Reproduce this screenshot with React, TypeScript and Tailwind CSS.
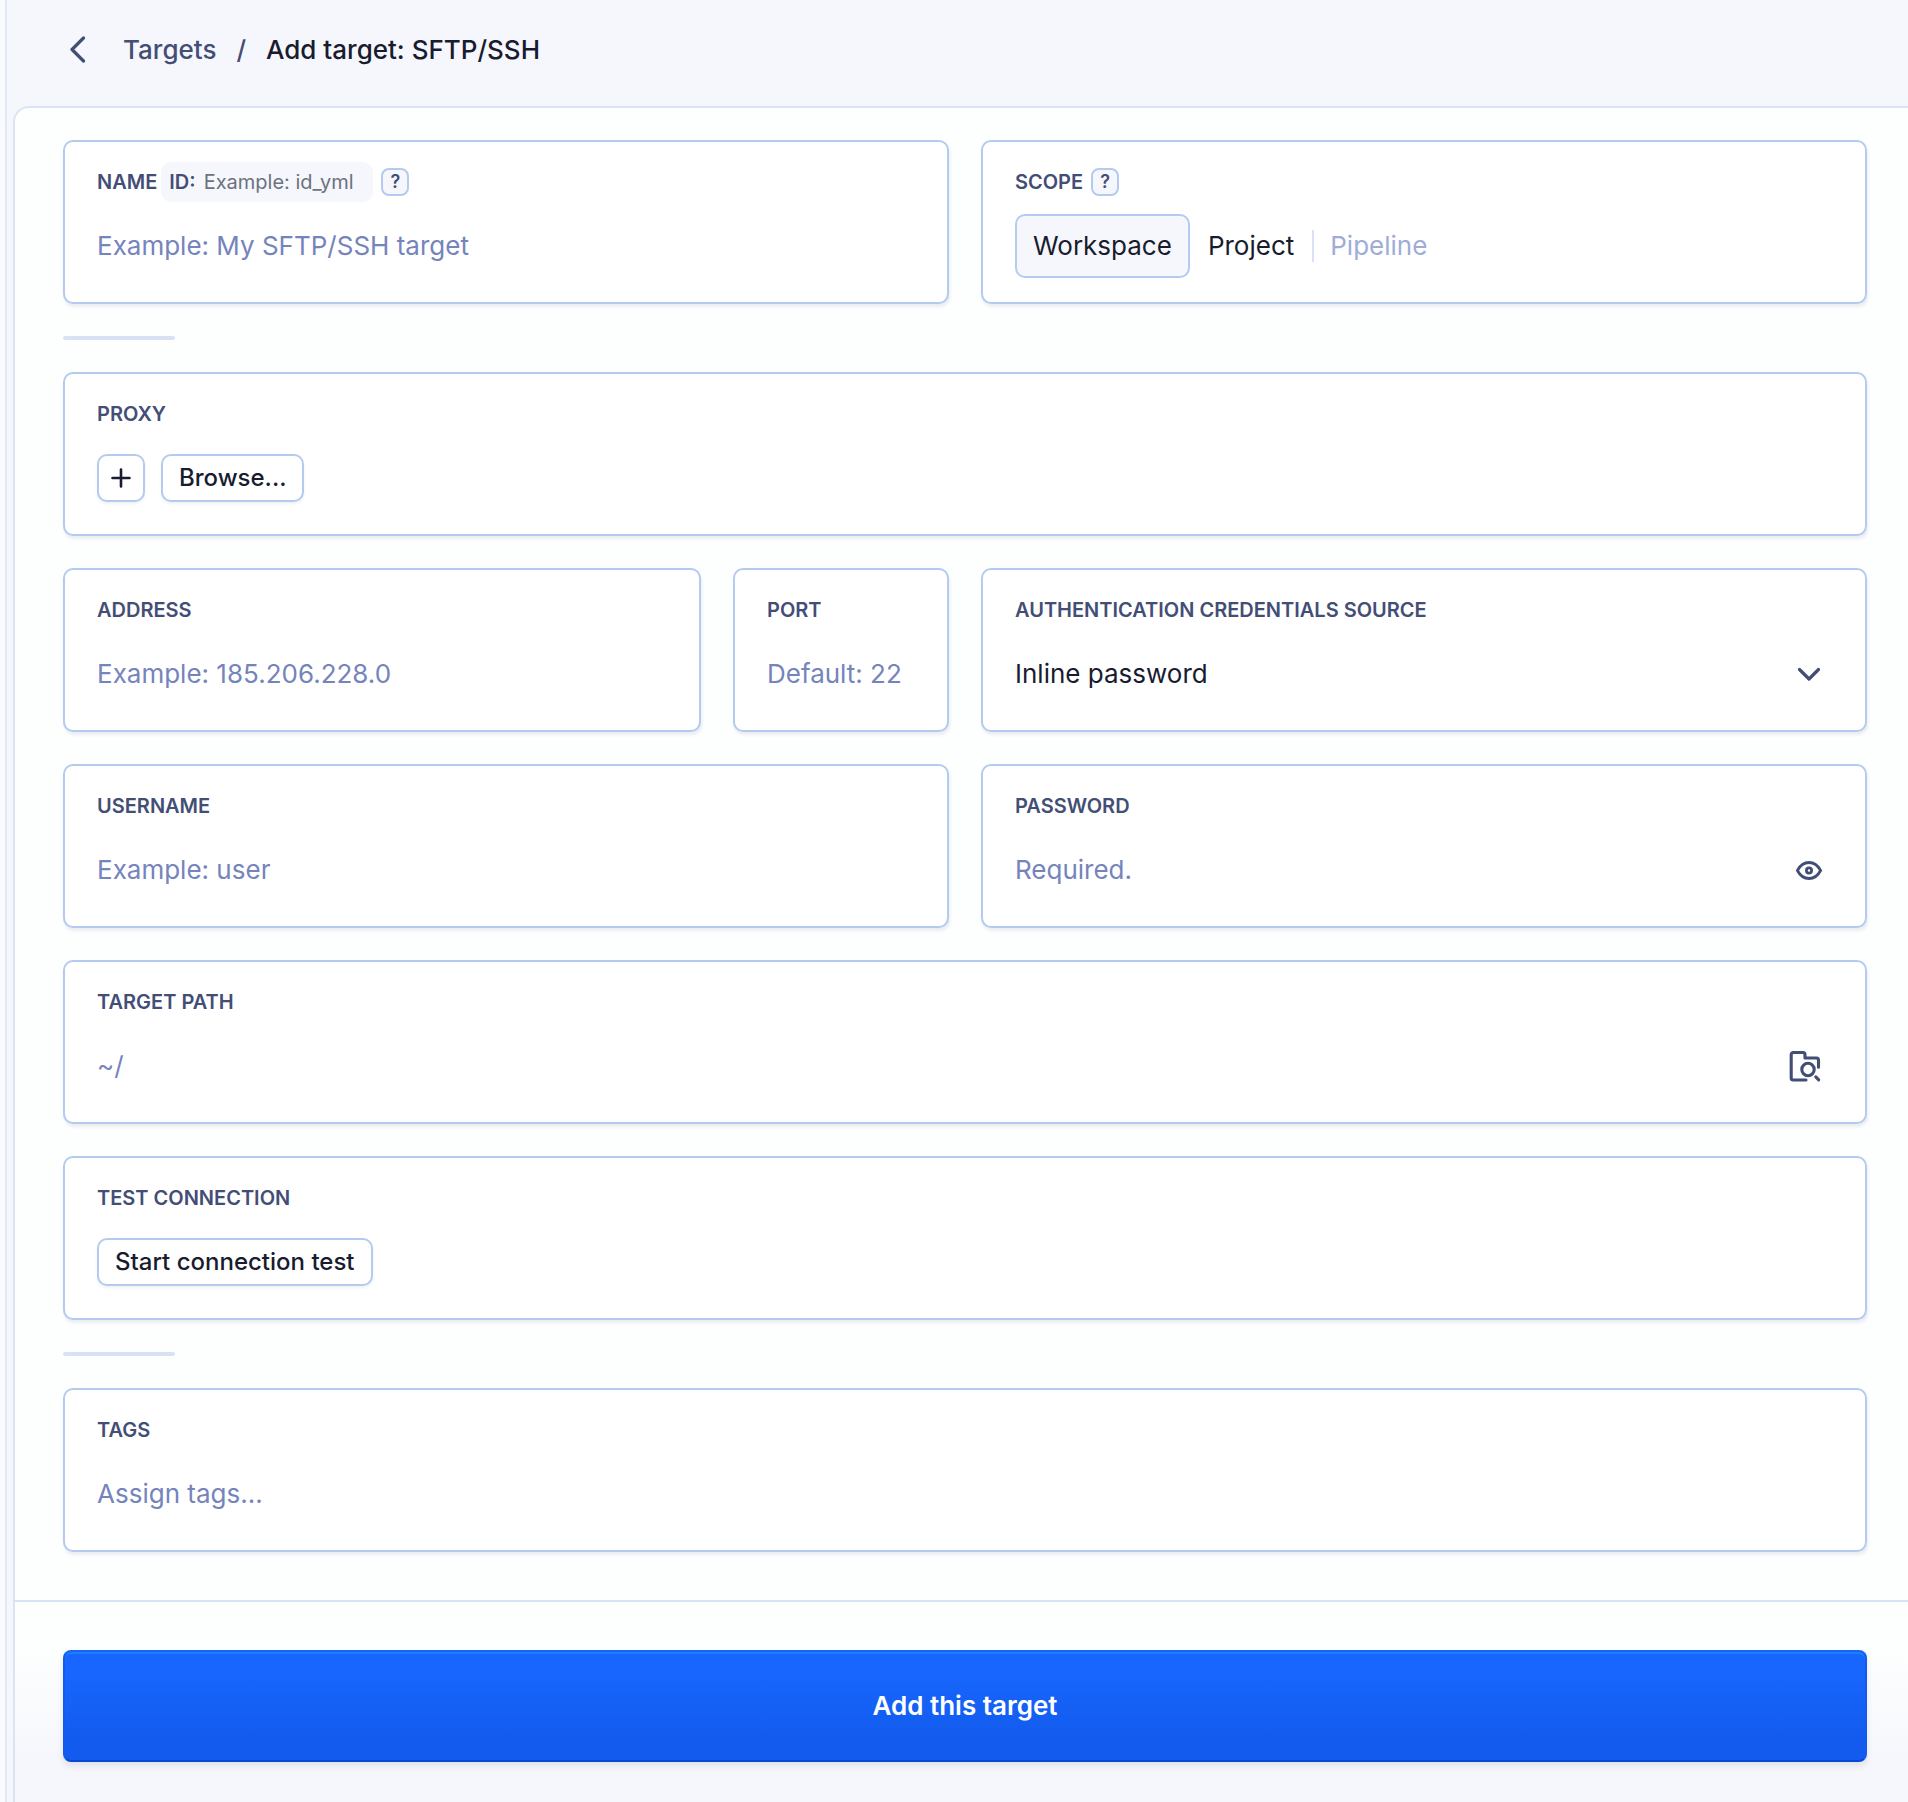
import { useState, type ReactNode } from "react";

type CardProps = {
    label: string;
    htmlFor?: string;
    extra?: ReactNode;
    className?: string;
    children: ReactNode;
}

type TextFieldProps = {
    id: string;
    label: string;
    placeholder: string;
    type?: string;
    extra?: ReactNode;
    action?: ReactNode;
    className?: string;
}

const scopes = ["Workspace", "Project"];

function Card({ label, htmlFor, extra, className = "", children }: CardProps) {
    return (
        <div className={`min-w-0 rounded-[10px] border-2 border-[#b4cbef] bg-white px-8 py-6 shadow-[1px_3px_3px_rgba(60,70,120,0.09)] ${className}`}>
            <div className="flex h-8 items-center text-xl font-semibold text-[#434e76]">
                {htmlFor ? <label htmlFor={htmlFor}>{label}</label> : <span>{label}</span>}
                {extra}
            </div>
            <div className="mt-4 flex h-16 items-center">
                {children}
            </div>
        </div>
    )
}

function TextField({ id, label, placeholder, type = "text", extra, action, className }: TextFieldProps) {
    return (
        <Card label={label} htmlFor={id} extra={extra} className={className}>
            <input
                id={id}
                type={type}
                placeholder={placeholder}
                className="h-full min-w-0 flex-1 bg-transparent pb-0.5 text-[26px] text-[#181c2e] outline-none placeholder:text-[#7584bb]"
            />
            {action}
        </Card>
    )
}

function HelpButton() {
    return (
        <button
            type="button"
            aria-label="Help"
            className="ml-2 flex size-7 items-center justify-center rounded-lg border-2 border-[#b4cbef] bg-[#f5f7fc] text-lg font-semibold text-[#434e76]"
        >
            ?
        </button>
    )
}

function SmallButton({ children, label, className = "" }: { children: ReactNode; label?: string; className?: string }) {
    return (
        <button
            type="button"
            aria-label={label}
            className={`flex h-12 items-center justify-center rounded-[10px] border-2 border-[#b4cbef] bg-white text-2xl font-medium text-[#181c2e] shadow-[0_2px_3px_rgba(60,70,120,0.07)] ${className}`}
        >
            {children}
        </button>
    )
}

function Divider() {
    return <hr className="h-1 w-28 rounded-sm border-0 bg-[#d9e1f4]" />
}

function ChevronDown() {
    return (
        <svg viewBox="0 0 24 24" className="size-6" fill="none" stroke="currentColor" strokeWidth="3.2" strokeLinecap="round" strokeLinejoin="round">
            <path d="M2.5 7.5 12 17l9.5-9.5" />
        </svg>
    )
}

function EyeIcon() {
    return (
        <svg viewBox="0 0 28 28" className="size-7" fill="none" stroke="currentColor" strokeWidth="2.8" strokeLinejoin="round">
            <path d="M2.400 14.500C5.200 9.200 9.300 6.500 14 6.500s8.800 2.700 11.600 8c-2.800 5.300-6.900 8-11.600 8s-8.800-2.700-11.600-8Z" />
            <circle cx="14" cy="14.500" r="2.600" />
        </svg>
    )
}

function FolderSearchIcon() {
    return (
        <svg viewBox="0 0 32 32" className="size-8" fill="none" stroke="currentColor" strokeWidth="3.1" strokeLinecap="round" strokeLinejoin="round">
            <path d="M17 30H4.200a2 2 0 0 1-2-2V4.500a2 2 0 0 1 2-2H14a2 2 0 0 1 2 2V8h11.500a2 2 0 0 1 2 2v7.300" />
            <circle cx="19" cy="19.500" r="6.200" />
            <path d="m26.800 26.800 2.900 3" />
        </svg>
    )
}

export default function App() {
    const [scope, setScope] = useState("Workspace")
    const [showPassword, setShowPassword] = useState(false)

    return (
        <div className="flex min-h-screen overflow-hidden bg-[#f9fafe] pl-[5px] font-['Inter',sans-serif]">
            <div className="flex flex-1 flex-col border-l-2 border-[#e2e9f8] bg-[#f6f7fc] pl-[6px]">
                <header className="flex h-[106px] items-center pb-2 pl-[50px] text-[26px] font-medium">
                    <a href="#back" aria-label="Back" className="flex w-12 justify-start pl-1.5 text-[#434e76]">
                        <svg viewBox="0 0 18 28" className="h-7 w-[18px]" fill="none" stroke="currentColor" strokeWidth="3.2" strokeLinecap="round" strokeLinejoin="round">
                            <path d="M14.500 3 3 14.500 14.500 26" />
                        </svg>
                    </a>
                    <nav aria-label="Breadcrumb" className="flex items-center pl-3">
                        <a href="#targets" className="text-[#434e76]">Targets</a>
                        <span className="px-5 text-[#434e76]">/</span>
                        <h1 className="text-[#181c2e]">Add target: SFTP/SSH</h1>
                    </nav>
                </header>

                <form className="flex flex-1 flex-col rounded-tl-2xl border-t-2 border-l-2 border-[#dbe4f6] bg-[#fdfefe]" onSubmit={(e) => e.preventDefault()}>
                    <div className="flex flex-col gap-8 pt-8 pr-[41px] pb-12 pl-12">
                        <div className="grid grid-cols-2 gap-8">
                            <TextField
                                id="name"
                                label="NAME"
                                placeholder="Example: My SFTP/SSH target"
                                extra={
                                    <>
                                        <span className="ml-1 flex h-10 w-[212px] items-center gap-2 rounded-[10px] bg-[#f5f7fc] px-2">
                                            <label htmlFor="target-id">ID:</label>
                                            <input
                                                id="target-id"
                                                type="text"
                                                placeholder="Example: id_yml"
                                                className="min-w-0 flex-1 bg-transparent font-normal outline-none placeholder:text-[#6b7280]"
                                            />
                                        </span>
                                        <HelpButton />
                                    </>
                                }
                            />
                            <Card label="SCOPE" extra={<HelpButton />}>
                                {scopes.map((name) => (
                                    <button
                                        key={name}
                                        type="button"
                                        aria-pressed={scope === name}
                                        onClick={() => setScope(name)}
                                        className={`h-16 rounded-[10px] border-2 px-4 pb-0.5 text-[26px] text-[#181c2e] ${scope === name ? "border-[#b4cbef] bg-[#f6f7fc]" : "border-transparent"}`}
                                    >
                                        {name}
                                    </button>
                                ))}
                                <span className="h-8 w-0.5 bg-[#d9e1f4]" />
                                <button type="button" disabled className="h-16 px-4 pb-0.5 text-[26px] text-[#9eacd8]">Pipeline</button>
                            </Card>
                        </div>

                        <Divider />

                        <Card label="PROXY">
                            <div className="flex gap-4">
                                <SmallButton label="Add proxy" className="w-12">
                                    <svg viewBox="0 0 20 20" className="size-5" fill="none" stroke="currentColor" strokeWidth="2.6" strokeLinecap="round">
                                        <path d="M10 1.500v17M1.500 10h17" />
                                    </svg>
                                </SmallButton>
                                <SmallButton className="px-4">Browse...</SmallButton>
                            </div>
                        </Card>

                        <div className="grid grid-cols-2 gap-8">
                            <div className="flex gap-8">
                                <TextField id="address" label="ADDRESS" placeholder="Example: 185.206.228.0" className="flex-1" />
                                <TextField id="port" label="PORT" placeholder="Default: 22" className="w-[216px]" />
                            </div>
                            <Card label="AUTHENTICATION CREDENTIALS SOURCE" htmlFor="source">
                                <div className="relative flex h-full flex-1 items-center">
                                    <select id="source" className="h-full w-full appearance-none bg-transparent pb-0.5 text-[26px] text-[#181c2e] outline-none">
                                        <option>Inline password</option>
                                    </select>
                                    <span className="pointer-events-none absolute right-3 text-[#434e76]">
                                        <ChevronDown />
                                    </span>
                                </div>
                            </Card>
                        </div>

                        <div className="grid grid-cols-2 gap-8">
                            <TextField id="username" label="USERNAME" placeholder="Example: user" />
                            <TextField
                                id="password"
                                label="PASSWORD"
                                type={showPassword ? "text" : "password"}
                                placeholder="Required."
                                action={
                                    <button
                                        type="button"
                                        aria-label="Show password"
                                        onClick={() => setShowPassword(!showPassword)}
                                        className="flex size-12 items-center justify-center text-[#434e76]"
                                    >
                                        <EyeIcon />
                                    </button>
                                }
                            />
                        </div>

                        <TextField
                            id="path"
                            label="TARGET PATH"
                            placeholder="~/"
                            action={
                                <button type="button" aria-label="Browse path" className="flex h-12 w-14 items-center justify-center text-[#434e76]">
                                    <FolderSearchIcon />
                                </button>
                            }
                        />

                        <Card label="TEST CONNECTION">
                            <SmallButton className="px-4">Start connection test</SmallButton>
                        </Card>

                        <Divider />

                        <TextField id="tags" label="TAGS" placeholder="Assign tags..." />
                    </div>

                    <footer className="flex-1 border-t-2 border-[#d9e1f4] bg-linear-to-b from-[#fdfefe] from-25% to-[#f6f7fc] to-75% py-12 pr-[41px] pl-12">
                        <button
                            type="submit"
                            className="h-28 w-full rounded-lg border-2 border-t-[#1763f5] border-r-[#105bf0] border-b-[#0648d4] border-l-[#105bf0] bg-linear-to-b from-[#1866fd] from-20% to-[#125bee] to-80% pb-0.5 text-[26px] font-semibold text-white shadow-[0_4px_6px_rgba(30,40,80,0.1),inset_0_2px_0_#1a80ff]"
                        >
                            Add this target
                        </button>
                    </footer>
                </form>
            </div>
        </div>
    )
}
